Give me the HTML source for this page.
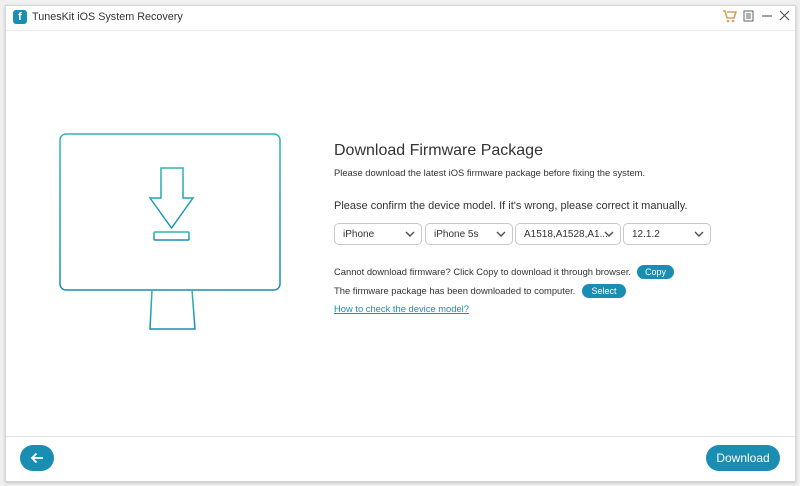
<!DOCTYPE html>
<html><head><style>
body{margin:0;width:800px;height:486px;background:#f0f0f0;font-family:"Liberation Sans",sans-serif;overflow:hidden;position:relative}
.win{position:absolute;left:5px;top:5px;width:789px;height:475px;background:#fff;border:1px solid #d8d8d8;box-shadow:0 1px 3px rgba(0,0,0,.2)}
.t{position:absolute;color:#333;white-space:nowrap}
.sel{position:absolute;top:223px;border:1px solid #c8c8c8;border-radius:5px;font-size:10px;color:#333;line-height:22px;padding-left:8px;box-sizing:border-box;height:22px}
.sel svg{position:absolute;right:6px;top:7px}
.btn{position:absolute;background:#1a8db3;color:#fff;border-radius:8px;font-size:9px;text-align:center}
</style></head><body>
<div class="win">
<div style="position:absolute;left:0;right:0;top:24px;border-top:1px solid #ececec"></div>
<div style="position:absolute;left:0;right:0;top:430px;border-top:1px solid #e4e4e4"></div>
</div>
<div style="position:absolute;left:13px;top:10px;width:14px;height:14px;background:#1a8db3;border-radius:3px;color:#fff;font-size:11px;font-weight:bold;text-align:center;line-height:14px">f</div>
<div class="t" style="left:32px;top:11px;font-size:10.8px;color:#333">TunesKit iOS System Recovery</div>
<svg style="position:absolute;left:722px;top:8px" width="70" height="16">
<path d="M1 3h2l2 7h7l2-6H5" fill="none" stroke="#d9a05b" stroke-width="1.6"/><circle cx="6" cy="13" r="1.3" fill="#d9a05b"/><circle cx="11" cy="13" r="1.3" fill="#d9a05b"/>
<rect x="22" y="3" width="9" height="10" fill="none" stroke="#666"/><path d="M24 6h5M24 8h5M24 10h5" stroke="#666"/>
<path d="M40 8h10" stroke="#666" stroke-width="1.2"/>
<path d="M58 3l9 9M67 3l-9 9" stroke="#555" stroke-width="1.2"/>
</svg>
<svg style="position:absolute;left:0;top:0" width="300" height="340">
<defs><linearGradient id="g" x1="0" y1="0" x2="0" y2="1"><stop offset="0" stop-color="#2cb8ae"/><stop offset="1" stop-color="#1a8cb8"/></linearGradient></defs>
<g fill="none" stroke="url(#g)" stroke-width="1.5">
<rect x="60" y="134" width="220" height="156" rx="6"/>
<path d="M60 268h220"/>
<path d="M161 168h22v30h10l-21.5 30-21.5-30h11z"/>
<rect x="154" y="232" width="35" height="8" rx="1"/>
<path d="M152 290l-2 39h45l-3-39"/>
</g></svg>
<div class="t" style="left:334px;top:142px;font-size:16px;color:#333">Download Firmware Package</div>
<div class="t" style="left:334px;top:167px;font-size:9.4px">Please download the latest iOS firmware package before fixing the system.</div>
<div class="t" style="left:334px;top:200px;font-size:11px">Please confirm the device model. If it's wrong, please correct it manually.</div>
<div class="sel" style="left:334px;width:88px">iPhone<svg width="10" height="7"><path d="M1 1l4 4 4-4" fill="none" stroke="#555" stroke-width="1.5"/></svg></div>
<div class="sel" style="left:425px;width:88px">iPhone 5s<svg width="10" height="7"><path d="M1 1l4 4 4-4" fill="none" stroke="#555" stroke-width="1.5"/></svg></div>
<div class="sel" style="left:515px;width:106px">A1518,A1528,A1...<svg width="10" height="7"><path d="M1 1l4 4 4-4" fill="none" stroke="#555" stroke-width="1.5"/></svg></div>
<div class="sel" style="left:623px;width:88px">12.1.2<svg width="10" height="7"><path d="M1 1l4 4 4-4" fill="none" stroke="#555" stroke-width="1.5"/></svg></div>
<div class="t" style="left:334px;top:266px;font-size:9.4px">Cannot download firmware? Click Copy to download it through browser.</div>
<div class="btn" style="left:637px;top:265px;width:37px;height:14px;line-height:14px">Copy</div>
<div class="t" style="left:334px;top:285px;font-size:9.4px">The firmware package has been downloaded to computer.</div>
<div class="btn" style="left:582px;top:284px;width:44px;height:14px;line-height:14px">Select</div>
<div class="t" style="left:334px;top:303px;font-size:9.4px;color:#1a8db3;text-decoration:underline">How to check the device model?</div>
<div style="position:absolute;left:20px;top:445px;width:34px;height:26px;border-radius:13px;background:#1a8db3"><svg width="34" height="26"><path d="M23 13H12M16.5 8.5L12 13l4.5 4.5" fill="none" stroke="#fff" stroke-width="1.8"/></svg></div>
<div class="btn" style="left:706px;top:445px;width:74px;height:26px;line-height:26px;border-radius:13px;font-size:12px">Download</div>
</body></html>
